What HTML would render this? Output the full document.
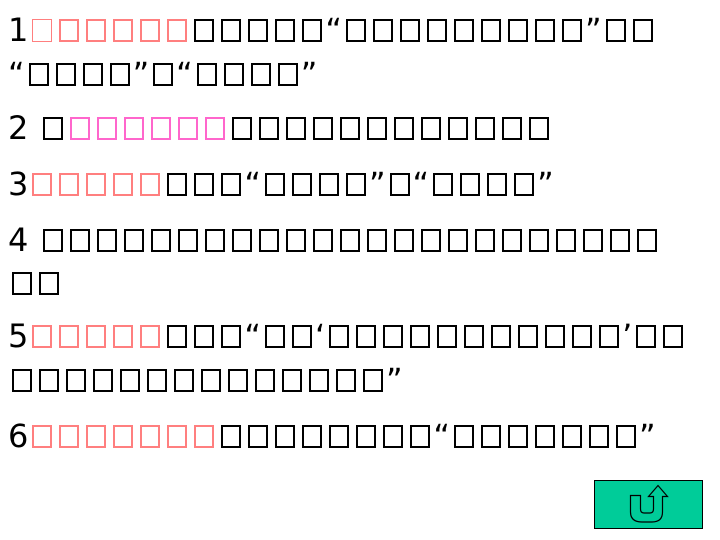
<!DOCTYPE html>
<html><head><meta charset="utf-8"><style>
body{margin:0;width:720px;height:540px;background:#fff;position:relative;overflow:hidden;font-family:"DejaVu Sans","Liberation Sans",sans-serif;}
.l{position:absolute;left:8px;font-size:32px;line-height:32px;white-space:nowrap;color:#000}
.b{display:inline-block;width:16px;height:19px;border:2px solid #000;margin:0 3px 0 4px;vertical-align:-1px}
.p .b,.b.p{border-color:#ff7f7f}
.m{border-color:#ff66cc!important}
.t{border-width:1px!important;width:18px;height:21px}
</style></head><body>
<div class="l" style="top:14px">1<span class="b p t"></span><span class="b p"></span><span class="b p"></span><span class="b p"></span><span class="b p"></span><span class="b p"></span><span class="b"></span><span class="b"></span><span class="b"></span><span class="b"></span><span class="b"></span>“<span class="b"></span><span class="b"></span><span class="b"></span><span class="b"></span><span class="b"></span><span class="b"></span><span class="b"></span><span class="b"></span><span class="b"></span>”<span class="b"></span><span class="b"></span></div>
<div class="l" style="top:58px">“<span class="b"></span><span class="b"></span><span class="b"></span><span class="b"></span>”<span class="b"></span>“<span class="b"></span><span class="b"></span><span class="b"></span><span class="b"></span>”</div>
<div class="l" style="top:112px">2 <span class="b"></span><span class="b m"></span><span class="b m"></span><span class="b m"></span><span class="b m"></span><span class="b m"></span><span class="b m"></span><span class="b"></span><span class="b"></span><span class="b"></span><span class="b"></span><span class="b"></span><span class="b"></span><span class="b"></span><span class="b"></span><span class="b"></span><span class="b"></span><span class="b"></span><span class="b"></span></div>
<div class="l" style="top:168px">3<span class="b p"></span><span class="b p"></span><span class="b p"></span><span class="b p"></span><span class="b p"></span><span class="b"></span><span class="b"></span><span class="b"></span>“<span class="b"></span><span class="b"></span><span class="b"></span><span class="b"></span>”<span class="b"></span>“<span class="b"></span><span class="b"></span><span class="b"></span><span class="b"></span>”</div>
<div class="l" style="top:224px">4 <span class="b"></span><span class="b"></span><span class="b"></span><span class="b"></span><span class="b"></span><span class="b"></span><span class="b"></span><span class="b"></span><span class="b"></span><span class="b"></span><span class="b"></span><span class="b"></span><span class="b"></span><span class="b"></span><span class="b"></span><span class="b"></span><span class="b"></span><span class="b"></span><span class="b"></span><span class="b"></span><span class="b"></span><span class="b"></span><span class="b"></span></div>
<div class="l" style="top:267px"><span class="b"></span><span class="b"></span></div>
<div class="l" style="top:320px">5<span class="b p"></span><span class="b p"></span><span class="b p"></span><span class="b p"></span><span class="b p"></span><span class="b"></span><span class="b"></span><span class="b"></span>“<span class="b"></span><span class="b"></span>‘<span class="b"></span><span class="b"></span><span class="b"></span><span class="b"></span><span class="b"></span><span class="b"></span><span class="b"></span><span class="b"></span><span class="b"></span><span class="b"></span><span class="b"></span>’<span class="b"></span><span class="b"></span></div>
<div class="l" style="top:364px"><span class="b"></span><span class="b"></span><span class="b"></span><span class="b"></span><span class="b"></span><span class="b"></span><span class="b"></span><span class="b"></span><span class="b"></span><span class="b"></span><span class="b"></span><span class="b"></span><span class="b"></span><span class="b"></span>”</div>
<div class="l" style="top:420px">6<span class="b p"></span><span class="b p"></span><span class="b p"></span><span class="b p"></span><span class="b p"></span><span class="b p"></span><span class="b p"></span><span class="b"></span><span class="b"></span><span class="b"></span><span class="b"></span><span class="b"></span><span class="b"></span><span class="b"></span><span class="b"></span>“<span class="b"></span><span class="b"></span><span class="b"></span><span class="b"></span><span class="b"></span><span class="b"></span><span class="b"></span>”</div>
<div style="position:absolute;left:594px;top:480px;width:107px;height:47px;background:#00cc99;border:1px solid #000"></div>
<svg style="position:absolute;left:580px;top:470px" width="130" height="70" viewBox="0 0 130 70">
<path d="M50.5 25.5 H60.5 V39 Q60.5 43 64 43 H70 Q73.5 43 73.5 39 V26.5 H68.5 L78 15.5 L87.5 26.5 H82.5 V42 Q82.5 52 72 52 H62 Q50.5 52 50.5 42 Z" fill="none" stroke="#000" stroke-width="1.2"/>
</svg>
</body></html>
